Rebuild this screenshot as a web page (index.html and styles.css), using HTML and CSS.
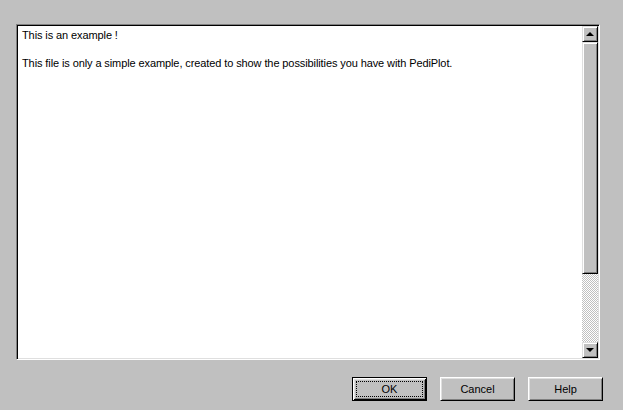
FILE: index.html
```html
<!DOCTYPE html>
<html lang="en">
<head>
    <meta charset="UTF-8">
    <title>PediPlot Notes</title>
    <link rel="stylesheet" href="styles.css">
</head>
<body>
    <div class="dialog">
        <div class="memo">
            <div class="memo-text">
                <p>This is an example !</p>
                <p>&nbsp;</p>
                <p>This file is only a simple example, created to show the possibilities you have with PediPlot.</p>
            </div>
            <div class="scrollbar">
                <div class="scroll-btn"><span class="arrow-up"></span></div>
                <div class="scroll-thumb"></div>
                <div class="scroll-track"></div>
                <div class="scroll-btn"><span class="arrow-down"></span></div>
            </div>
        </div>

        <div class="button-row">
            <button class="button default"><span class="focus">OK</span></button>
            <button class="button">Cancel</button>
            <button class="button">Help</button>
        </div>
    </div>
</body>
</html>
```

FILE: styles.css
```css
/* Page */
body {
    margin: 0;
    background-color: #c0c0c0;
    font-family: 'Liberation Sans', Arial, sans-serif;
    font-size: 11px;
    color: #000;
}

.dialog {
    width: 623px;
    height: 410px;
    padding: 24px 0 0 16px;
    box-sizing: border-box;
}

/* Sunken memo box */
.memo {
    display: flex;
    width: 584px;
    height: 336px;
    box-sizing: border-box;
    border-top: 1px solid #808080;
    border-left: 1px solid #808080;
    border-right: 1px solid #ffffff;
    border-bottom: 1px solid #ffffff;
    box-shadow: inset 1px 1px 0 #000, inset -1px -1px 0 #dfdfdf;
    background-color: #ffffff;
    padding: 1px;
}

.memo-text {
    flex: 1;
    padding: 2px 0 0 4px;
    letter-spacing: -0.1px;
}

.memo-text p {
    margin: 0;
    line-height: 14px;
}

/* Scrollbar */
.scrollbar {
    width: 16px;
    display: flex;
    flex-direction: column;
}

.scroll-btn,
.scroll-thumb {
    background-color: #c0c0c0;
    box-sizing: border-box;
    border-top: 1px solid #dfdfdf;
    border-left: 1px solid #dfdfdf;
    border-right: 1px solid #000;
    border-bottom: 1px solid #000;
    box-shadow: inset 1px 1px 0 #fff, inset -1px -1px 0 #808080;
}

.scroll-btn {
    height: 16px;
    display: flex;
    justify-content: center;
    align-items: center;
}

.arrow-up {
    width: 0;
    height: 0;
    border-left: 4px solid transparent;
    border-right: 4px solid transparent;
    border-bottom: 4px solid #000;
}

.arrow-down {
    width: 0;
    height: 0;
    border-left: 4px solid transparent;
    border-right: 4px solid transparent;
    border-top: 4px solid #000;
}

.scroll-thumb {
    height: 232px;
}

.scroll-track {
    flex: 1;
    background-color: #c0c0c0;
    background-image: conic-gradient(#fff 25%, #c0c0c0 0 50%, #fff 0 75%, #c0c0c0 0);
    background-size: 2px 2px;
}

/* Buttons */
.button-row {
    display: flex;
    justify-content: flex-end;
    gap: 13px;
    margin-top: 17px;
    padding-right: 20px;
}

.button {
    width: 75px;
    height: 24px;
    padding: 0;
    box-sizing: border-box;
    background-color: #c0c0c0;
    font-family: 'Liberation Sans', Arial, sans-serif;
    font-size: 11px;
    color: #000;
    border-top: 1px solid #fff;
    border-left: 1px solid #fff;
    border-right: 1px solid #000;
    border-bottom: 1px solid #000;
    box-shadow: inset 1px 1px 0 #dfdfdf, inset -1px -1px 0 #808080;
    cursor: pointer;
}

.button.default {
    border: 1px solid #000;
    box-shadow: inset 1px 1px 0 #fff, inset -1px -1px 0 #000, inset 2px 2px 0 #dfdfdf, inset -2px -2px 0 #808080;
    padding: 3px;
}

.focus {
    display: flex;
    justify-content: center;
    align-items: center;
    height: 100%;
    border: 1px dotted #000;
    box-sizing: border-box;
}
```
